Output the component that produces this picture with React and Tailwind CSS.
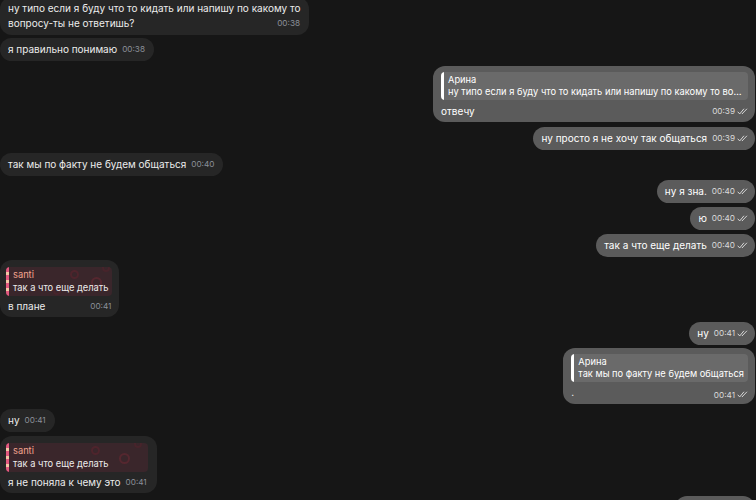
import React from "react";

const font = { fontFamily: "Inter, 'Noto Sans', 'Liberation Sans', sans-serif" };

function Checks() {
  return (
    <svg width="11" height="7" viewBox="0 0 12 8" fill="none" className="ml-[2px] inline-block">
      <path d="M0.8 4.6 L2.8 6.8 L7.4 1.2" stroke="currentColor" strokeWidth="1.1" strokeLinecap="round" strokeLinejoin="round" />
      <path d="M5.6 6.6 L10.8 1.2" stroke="currentColor" strokeWidth="1.1" strokeLinecap="round" />
    </svg>
  );
}

function Time({ t, out }) {
  return (
    <span className={`ml-[5px] inline-flex shrink-0 items-center text-[8.2px] leading-none ${out ? "text-[#dcdcdc]" : "text-[#8c9099]"}`}>
      {t}
      {out && <Checks />}
    </span>
  );
}

function In({ children, t, className = "" }) {
  return (
    <div className={`flex ${className}`}>
      <div className="flex items-center rounded-[12px] bg-[#262626] py-[4px] pl-[8px] pr-[9px] text-[10px] leading-[15px] text-[#ececec]">
        <span>{children}</span>
        <Time t={t} />
      </div>
    </div>
  );
}

function Out({ children, t, className = "" }) {
  return (
    <div className={`flex justify-end pr-[1px] ${className}`}>
      <div className="flex items-center rounded-[12px] bg-[#5b5b5b] py-[4px] pl-[8px] pr-[7px] text-[10px] leading-[15px] text-white">
        <span>{children}</span>
        <Time t={t} out />
      </div>
    </div>
  );
}

function PinkQuote({ text }) {
  return (
    <div className="relative flex overflow-hidden rounded-[4px] bg-[#3a262b]">
      <div className="w-[3px] shrink-0 bg-[repeating-linear-gradient(180deg,#e2587f_0px,#e2587f_5px,#f3c6a6_5px,#f3c6a6_8px)]" />
      <div className="pointer-events-none absolute inset-0">
        <span className="absolute left-[60%] top-[3px] h-[9px] w-[9px] rounded-full border-2 border-[#4e242c]" />
        <span className="absolute left-[80%] top-[10px] h-[11px] w-[11px] rounded-full border-2 border-[#55272f]" />
        <span className="absolute left-[44%] top-[20px] h-[8px] w-[8px] rounded-full border-2 border-[#47242b]" />
        <span className="absolute left-[90%] top-[-3px] h-[8px] w-[8px] rounded-full border-2 border-[#47242b]" />
      </div>
      <div className="relative whitespace-nowrap py-[2px] pl-[4px] pr-[4px] text-[9.3px] leading-[12.5px]">
        <div className="text-[#f2a38e]">santi</div>
        <div className="text-[#ececec]">{text}</div>
      </div>
    </div>
  );
}

function GreyQuote({ text, cut }) {
  return (
    <div className="flex overflow-hidden rounded-[4px] bg-[#6a6a6a]">
      <div className="w-[3px] shrink-0 bg-white" />
      <div className="min-w-0 py-[2px] pl-[4px] pr-[4px] text-[9.3px] leading-[12px] text-white">
        <div>Арина</div>
        <div className={cut ? "truncate" : "whitespace-nowrap"}>{text}</div>
      </div>
    </div>
  );
}

export default function App() {
  return (
    <div className="h-[500px] w-[756px] overflow-hidden bg-[#161616]" style={font}>
      <div className="flex flex-col">
        <div className="mt-[-3px] flex">
          <div className="w-[309px] rounded-[12px] bg-[#262626] py-[4px] pl-[8px] pr-[9px] text-[10px] leading-[15px] text-[#ececec]">
            <div className="whitespace-nowrap">ну типо если я буду что то кидать или напишу по какому то</div>
            <div className="flex items-center justify-between">
              <span>вопросу-ты не ответишь?</span>
              <Time t="00:38" />
            </div>
          </div>
        </div>

        <In t="00:38" className="mt-[3px]">я правильно понимаю</In>

        <div className="mt-[5px] flex justify-end pr-[1px]">
          <div className="w-[322px] rounded-[12px] bg-[#5b5b5b] pb-[3px] pl-[8px] pr-[7px] pt-[6px] text-[10px] leading-[15px] text-white">
            <GreyQuote cut text="ну типо если я буду что то кидать или напишу по какому то вопросу-ты не ответишь?" />
            <div className="mt-[4px] flex items-center justify-between">
              <span>отвечу</span>
              <Time t="00:39" out />
            </div>
          </div>
        </div>

        <Out t="00:39" className="mt-[5px]">ну просто я не хочу так общаться</Out>
        <In t="00:40" className="mt-[3px]">так мы по факту не будем общаться</In>
        <Out t="00:40" className="mt-[4px]">ну я зна.</Out>
        <Out t="00:40" className="mt-[4px]">ю</Out>
        <Out t="00:40" className="mt-[4px]">так а что еще делать</Out>

        <div className="mt-[3px] flex">
          <div className="rounded-[12px] bg-[#262626] pb-[3px] pl-[6px] pr-[7px] pt-[7px] text-[10px] leading-[15px] text-[#ececec]">
            <PinkQuote text="так а что еще делать" />
            <div className="mt-[3px] flex items-center justify-between pl-[2px] pr-[1px]">
              <span>в плане</span>
              <Time t="00:41" />
            </div>
          </div>
        </div>

        <Out t="00:41" className="mt-[5px]">ну</Out>

        <div className="mt-[3px] flex justify-end pr-[1px]">
          <div className="rounded-[12px] bg-[#5b5b5b] pb-[3px] pl-[8px] pr-[7px] pt-[6px] text-[10px] leading-[15px] text-white">
            <GreyQuote text="так мы по факту не будем общаться" />
            <div className="mt-[4px] flex h-[15px] items-center justify-between">
              <span className="-mt-[3px]">.</span>
              <span className="mt-[3px] inline-flex"><Time t="00:41" out /></span>
            </div>
          </div>
        </div>

        <In t="00:41" className="mt-[5px]">ну</In>

        <div className="mt-[4px] flex">
          <div className="rounded-[12px] bg-[#262626] pb-[3px] pl-[6px] pr-[9px] pt-[7px] text-[10px] leading-[15px] text-[#ececec]">
            <PinkQuote text="так а что еще делать" />
            <div className="mt-[3px] flex items-center justify-between pl-[2px] pr-[1px]">
              <span>я не поняла к чему это</span>
              <Time t="00:41" />
            </div>
          </div>
        </div>

        <div className="mt-[3px] flex justify-end pr-[1px]">
          <div className="h-[24px] w-[80px] rounded-[12px] bg-[#5b5b5b]" />
        </div>
      </div>
    </div>
  );
}
